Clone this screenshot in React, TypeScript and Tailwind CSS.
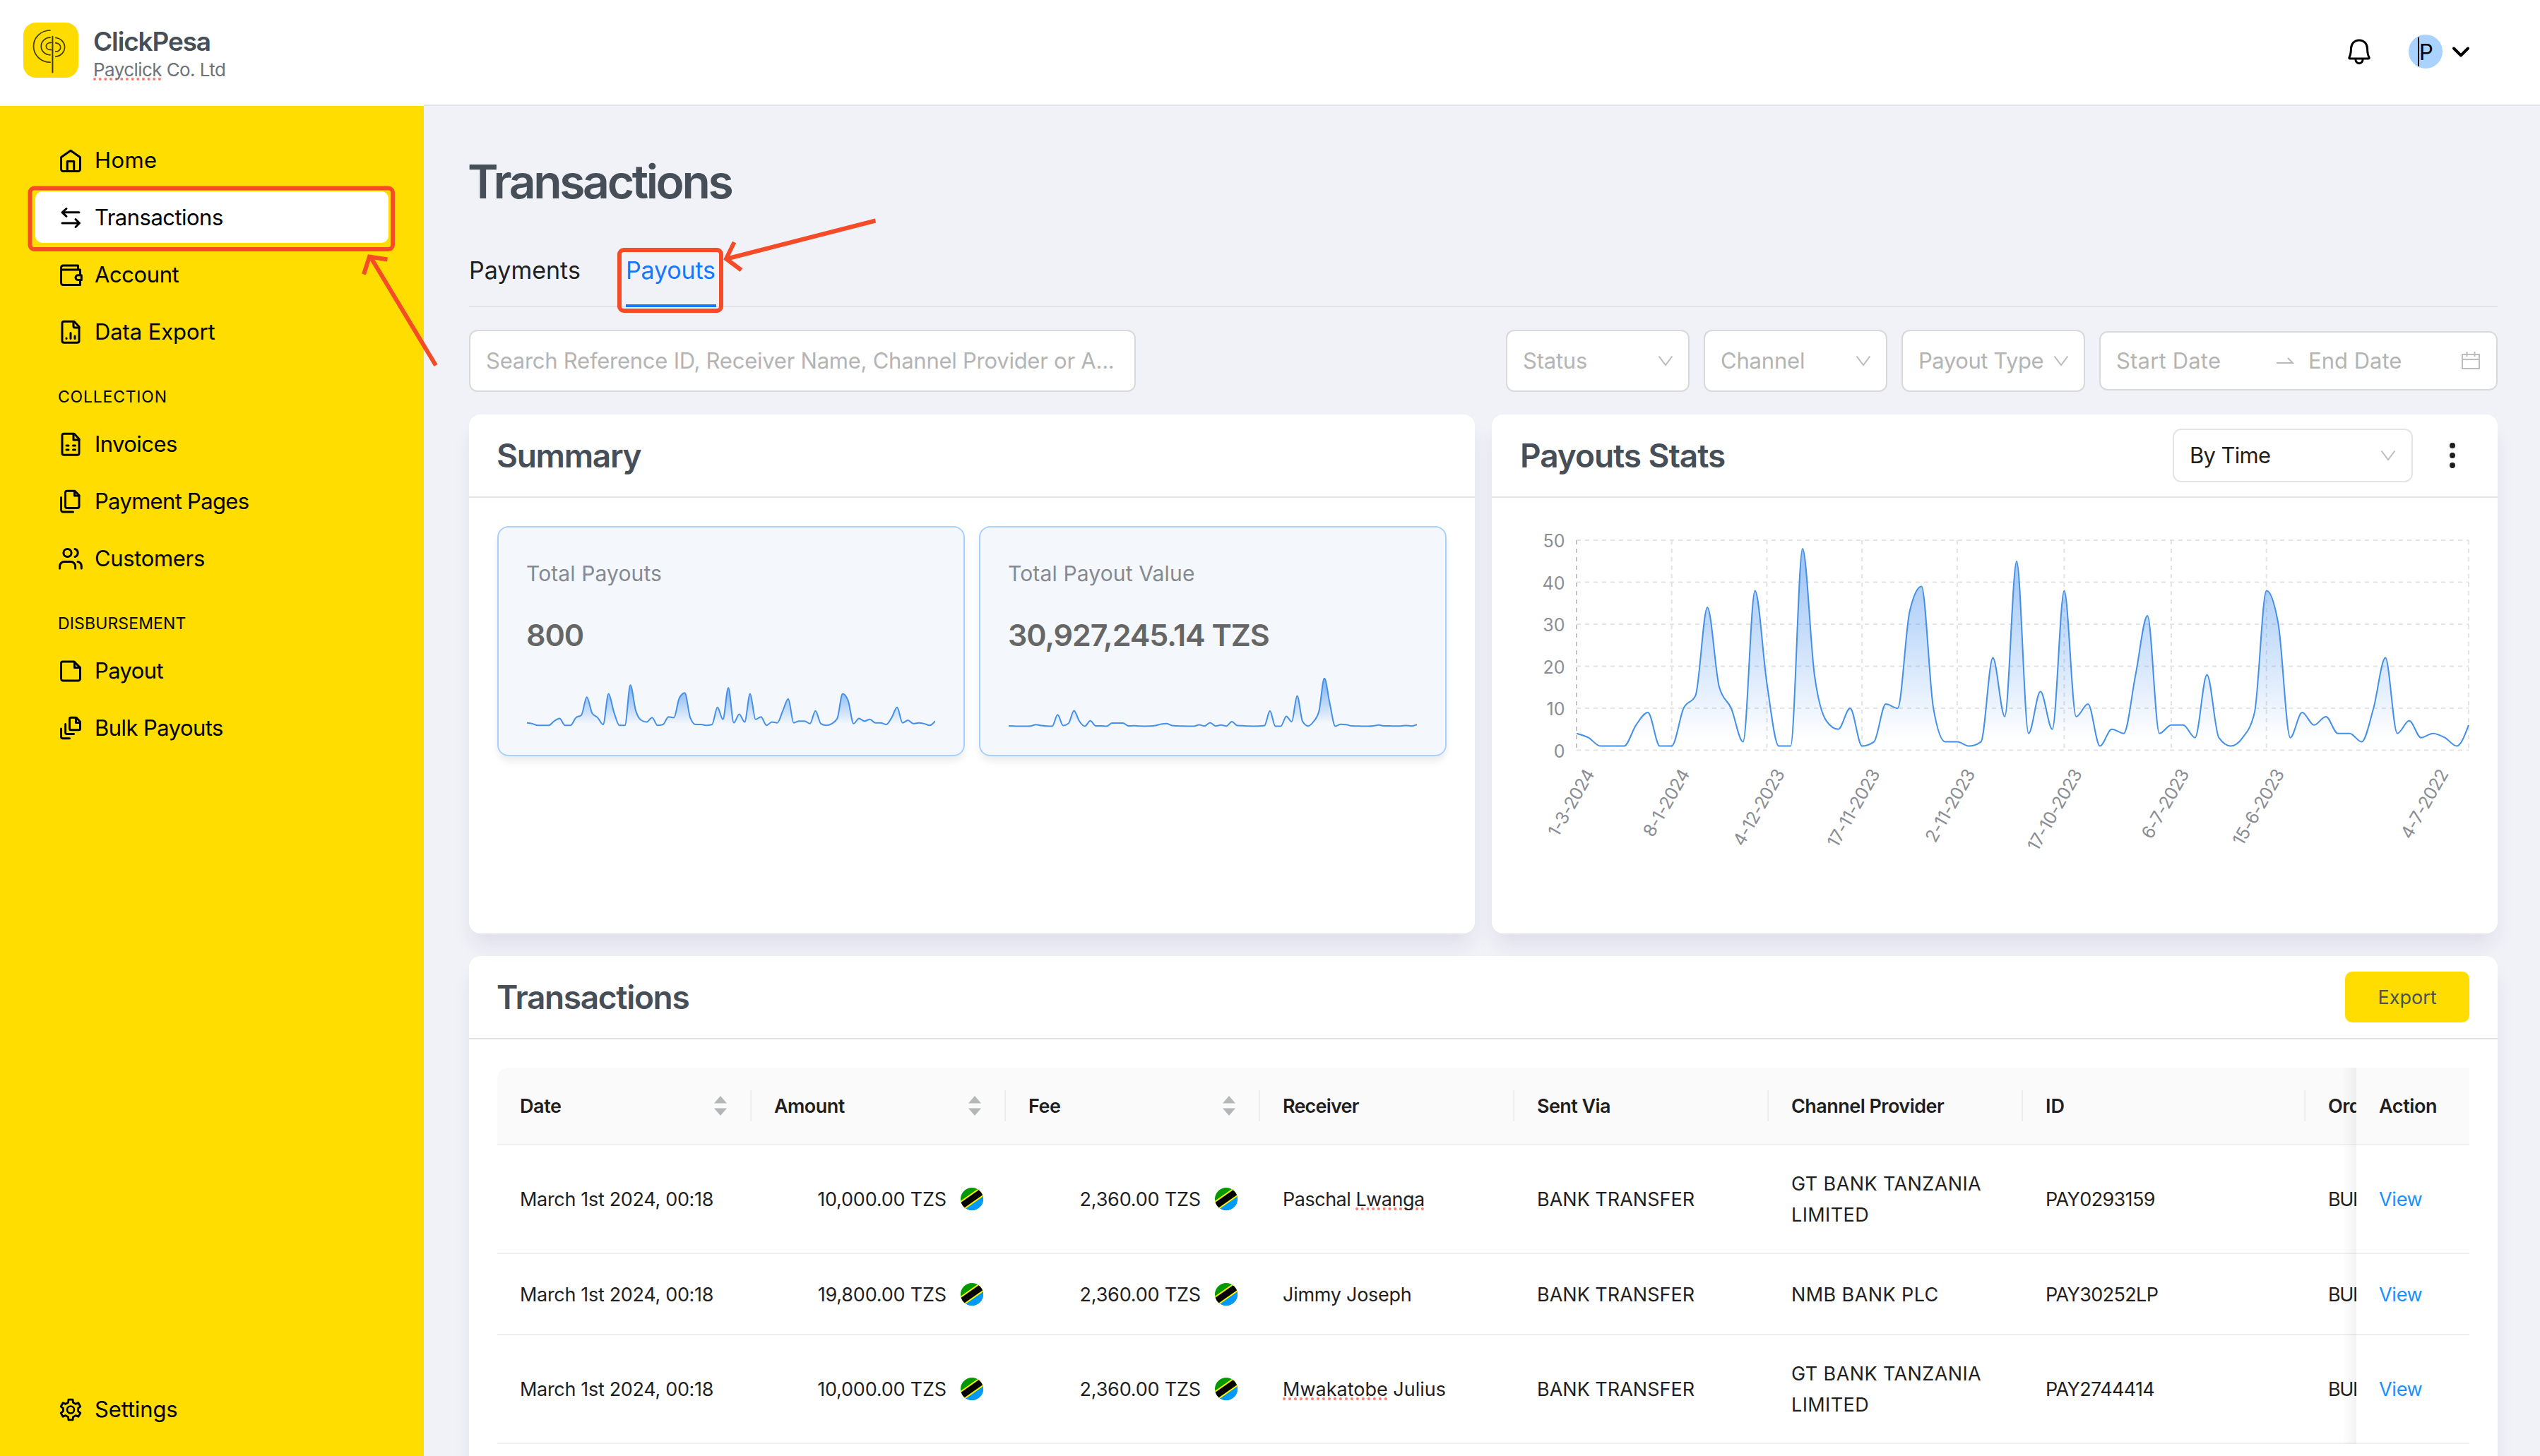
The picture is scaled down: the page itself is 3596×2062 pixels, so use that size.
import type { ReactNode } from 'react'

interface NavItem {
  label: string
  tracking: string
  icon: ReactNode
  active?: boolean
}

interface Transaction {
  id: string
  amount: string
  fee: string
  receiver: ReactNode
  receiverTracking: string
  provider: ReactNode
  rowHeight: string
}

const PAYOUT_COUNTS = [
  4, 3, 1, 1, 1, 6, 9, 1, 1, 10, 13, 34, 15, 10, 2, 38, 16, 1, 1, 48, 18, 7, 5, 10, 1, 2, 11, 10, 33, 39, 10, 2, 2, 1,
  2, 22, 8, 45, 4, 14, 5, 38, 8, 11, 1, 5, 4, 18, 32, 4, 6, 6, 3, 18, 3, 1, 3, 9, 38, 30, 3, 9, 6, 8, 4, 4, 2, 10, 22,
  4, 7, 3, 4, 3, 1, 6,
]

const PAYOUT_VALUES = [
  0.4, 0.2, 0, 0, 0.3, 2.3, 1, 0.3, 0, 16.3, 1, 4, 22, 7, 0, 7.7, 0.5, 0.5, 0, 4.5, 4.5, 4.5, 0.5, 0.7, 0.2, 0.1, 0.2,
  1, 3, 3.7, 1, 0.5, 0.2, 0.1, 0.1, 2, 0.3, 5, 0.3, 1.7, 0.3, 6.5, 1, 0.7, 0.2, 0.1, 0.2, 1, 21.7, 0, 0, 14, 6.5, 43,
  6.7, 0.3, 6.5, 21, 68, 32, 0, 2.7, 2.3, 0.5, 0.3, 0.1, 0, 0.5, 1.7, 0.5, 0.4, 0.2, 0.3, 1, 0.3, 2.3,
]

// Monotone cubic interpolation, keeps the curve from overshooting its points
function monotonePath(points: [number, number][]) {
  const n = points.length
  const slopes: number[] = []
  for (let i = 0; i < n - 1; i++) {
    slopes.push((points[i + 1][1] - points[i][1]) / (points[i + 1][0] - points[i][0]))
  }
  const tangents = points.map((_, i) => {
    if (i === 0 || i === n - 1) return 0
    const a = slopes[i - 1]
    const b = slopes[i]
    return (Math.sign(a) + Math.sign(b)) * Math.min(Math.abs(a), Math.abs(b), 0.25 * Math.abs(a + b))
  })
  tangents[0] = (3 * slopes[0] - tangents[1]) / 2
  tangents[n - 1] = (3 * slopes[n - 2] - tangents[n - 2]) / 2

  let d = `M${points[0][0]},${points[0][1]}`
  for (let i = 0; i < n - 1; i++) {
    const [x0, y0] = points[i]
    const [x1, y1] = points[i + 1]
    const h = (x1 - x0) / 3
    d += `C${x0 + h},${y0 + h * tangents[i]},${x1 - h},${y1 - h * tangents[i + 1]},${x1},${y1}`
  }
  return d
}

function gearPath() {
  const at = (deg: number, r: number) => {
    const a = (deg * Math.PI) / 180
    return `${(20 + r * Math.cos(a)).toFixed(2)} ${(20.5 + r * Math.sin(a)).toFixed(2)}`
  }
  let d = ''
  for (let k = 0; k < 6; k++) {
    const a = -90 + 60 * k
    d += `${k === 0 ? 'M' : 'L'}${at(a - 19, 10.8)}L${at(a - 12, 14.6)}L${at(a + 12, 14.6)}L${at(a + 19, 10.8)}`
  }
  return d + 'Z'
}

function NavIcon({ children }: { children: ReactNode }) {
  return (
    <svg
      className="size-10 shrink-0"
      viewBox="0 0 40 40"
      fill="none"
      stroke="currentColor"
      strokeWidth="3"
      strokeLinecap="round"
      strokeLinejoin="round"
    >
      {children}
    </svg>
  )
}

const mainItems: NavItem[] = [
  {
    label: 'Home',
    tracking: 'tracking-[0.013em]',
    icon: (
      <NavIcon>
        <path d="M6.5 15.8 20 6.2l13.5 9.6V32.500a3 3 0 0 1-3 3h-21a3 3 0 0 1-3-3Z" />
        <path d="M15.300 35V21.500h9.400V35" />
      </NavIcon>
    ),
  },
  {
    label: 'Transactions',
    tracking: 'tracking-[-0.017em]',
    active: true,
    icon: (
      <NavIcon>
        <path d="M32 12.800H8M14 7.500 8 12.800l6 5.500M8 28h24.500M27 22.500l5.500 5.500-5.500 5.500" />
      </NavIcon>
    ),
  },
  {
    label: 'Account',
    tracking: 'tracking-[-0.013em]',
    icon: (
      <NavIcon>
        <path d="M30.500 13V7H9.500a3 3 0 0 0-3 3v21.500a3 3 0 0 0 3 3h24v-6M33.500 19.500V13H8.500" />
        <path d="M35.300 20.800h-5a3.300 3.300 0 0 0 0 6.600h5Z" />
      </NavIcon>
    ),
  },
  {
    label: 'Data Export',
    tracking: 'tracking-[-0.003em]',
    icon: (
      <NavIcon>
        <path d="M10.500 5.200H25l7 7.500v20a2.600 2.600 0 0 1-2.600 2.600H10.600A2.600 2.600 0 0 1 8 32.700v-25a2.500 2.500 0 0 1 2.500-2.500Z" />
        <path d="M24 5.500V12a2 2 0 0 0 2 2h6M14 29v.5M20 21.500v8M26 26v3.500" />
      </NavIcon>
    ),
  },
]

const collectionItems: NavItem[] = [
  {
    label: 'Invoices',
    tracking: 'tracking-[-0.018em]',
    icon: (
      <NavIcon>
        <path d="M10.500 5.200H25l7 7.500v20a2.600 2.600 0 0 1-2.600 2.600H10.600A2.600 2.600 0 0 1 8 32.700v-25a2.500 2.500 0 0 1 2.500-2.500Z" />
        <path d="M24 5.500V14h8M14 22h3M23.500 22h3M14 28h3M23.500 28h3" />
      </NavIcon>
    ),
  },
  {
    label: 'Payment Pages',
    tracking: 'tracking-[-0.022em]',
    icon: (
      <NavIcon>
        <path d="M15 5.200h11l6 6.300v15.500a2.600 2.600 0 0 1-2.600 2.600H15a2.500 2.500 0 0 1-2.500-2.500V7.700A2.500 2.500 0 0 1 15 5.200Z" />
        <path d="M25.500 5.500V12H32M6.500 14.500V32a3 3 0 0 0 3 3H23.500" />
      </NavIcon>
    ),
  },
  {
    label: 'Customers',
    tracking: 'tracking-[-0.011em]',
    icon: (
      <NavIcon>
        <circle cx="15.500" cy="12" r="5.600" />
        <path d="M26 6.500a5.700 5.700 0 0 1 0 11M4.600 34v-3a6.500 6.500 0 0 1 6.500-6.500h9a6.500 6.500 0 0 1 6.500 6.500v3M30 24.500c3 .6 5.300 3 5.300 6.500v3" />
      </NavIcon>
    ),
  },
]

const disbursementItems: NavItem[] = [
  {
    label: 'Payout',
    tracking: 'tracking-[-0.019em]',
    icon: (
      <NavIcon>
        <path d="M9 7h16l8.500 8.500V31a3 3 0 0 1-3 3h-21a3 3 0 0 1-3-3V9.500A2.500 2.500 0 0 1 9 7Z" />
        <path d="M25.500 7.500v8h8" />
      </NavIcon>
    ),
  },
  {
    label: 'Bulk Payouts',
    tracking: 'tracking-[-0.018em]',
    icon: (
      <NavIcon>
        <path d="M20.500 5.200h7.500l5.500 6v9.600a2 2 0 0 1-2 2h-11a2 2 0 0 1-2-2V7.200a2 2 0 0 1 2-2Z" />
        <path d="M27.500 6v6.500h5.500M12.600 14.500v11.800a2.300 2.300 0 0 0 2.300 2.300H24.500M6.500 21v11.200a2.500 2.500 0 0 0 2.500 2.500h9.500" />
      </NavIcon>
    ),
  },
]

const settingsItem: NavItem = {
  label: 'Settings',
  tracking: 'tracking-[-0.005em]',
  icon: (
    <NavIcon>
      <path d={gearPath()} strokeWidth="2.800" />
      <circle cx="20" cy="20.500" r="5" strokeWidth="2.600" />
    </NavIcon>
  ),
}

function Misspelled({ children }: { children: ReactNode }) {
  return (
    <span className="underline decoration-dotted decoration-[4px] underline-offset-[2px] decoration-[#ff7a70] [text-decoration-skip-ink:none]">
      {children}
    </span>
  )
}

const transactions: Transaction[] = [
  {
    id: 'PAY0293159',
    amount: '10,000.00 TZS',
    fee: '2,360.00 TZS',
    receiver: <>Paschal <Misspelled>Lwanga</Misspelled></>,
    receiverTracking: 'tracking-[-0.018em]',
    provider: <>GT BANK TANZANIA<br />LIMITED</>,
    rowHeight: 'h-[154px]',
  },
  {
    id: 'PAY30252LP',
    amount: '19,800.00 TZS',
    fee: '2,360.00 TZS',
    receiver: 'Jimmy Joseph',
    receiverTracking: 'tracking-[-0.010em]',
    provider: 'NMB BANK PLC',
    rowHeight: 'h-[115px]',
  },
  {
    id: 'PAY2744414',
    amount: '10,000.00 TZS',
    fee: '2,360.00 TZS',
    receiver: <><Misspelled>Mwakatobe</Misspelled> Julius</>,
    receiverTracking: 'tracking-normal',
    provider: <>GT BANK TANZANIA<br />LIMITED</>,
    rowHeight: 'h-[154px]',
  },
]

const columns = [
  { title: 'Date', width: 'w-[360px]', tracking: 'tracking-[-0.015em]', sortable: true },
  { title: 'Amount', width: 'w-[360px]', tracking: 'tracking-[-0.02em]', sortable: true },
  { title: 'Fee', width: 'w-[360px]', tracking: 'tracking-[-0.02em]', sortable: true },
  { title: 'Receiver', width: 'w-[360px]', tracking: 'tracking-[-0.030em]', sortable: false },
  { title: 'Sent Via', width: 'w-[360px]', tracking: 'tracking-[-0.022em]', sortable: false },
  { title: 'Channel Provider', width: 'w-[360px]', tracking: 'tracking-[-0.020em]', sortable: false },
  { title: 'ID', width: 'w-[400px]', tracking: 'tracking-normal', sortable: false },
]

function Logo() {
  return (
    <div className="size-[78px] rounded-[18px] bg-[#fedc00]">
      <svg className="size-full" viewBox="0 0 78 78" fill="none" stroke="#3d3a0c" strokeWidth="1.700" strokeLinecap="round">
        <path d="M41.400 19.800V70.500" strokeWidth="2" />
        <path d="M38 11A23.500 22.600 0 0 0 38 56.200M38 21.200A12.800 12.300 0 0 0 38 45.800M39.300 28.300C30 28.300 30 38.600 39.300 38.600" />
        <path d="M45.800 21.500A14 13.400 0 0 1 45.800 48.200M45.800 28.800A7 6.200 0 0 1 45.800 41.200" />
      </svg>
    </div>
  )
}

function Header() {
  return (
    <header className="flex h-[150px] bg-white">
      <div className="flex w-[600px] gap-[21px] pl-[33px] pt-8">
        <Logo />
        <div className="pt-[5px]">
          <div className="text-[37px] font-semibold leading-[44px] tracking-[-0.031em] text-[#464e58]">ClickPesa</div>
          <div className="text-[26px] leading-[36px] tracking-[-0.022em] text-[#6d727b]">
            <Misspelled>Payclick</Misspelled> Co. Ltd
          </div>
        </div>
      </div>
      <div className="flex flex-1 items-center justify-end border-b-2 border-[#e3e4e9] pb-[2px] pr-[98px]">
        <svg className="mr-[50px] size-10" viewBox="0 0 40 40" fill="none" stroke="#000" strokeWidth="3" strokeLinejoin="round">
          <path d="M20 3.900C13 3.900 8.800 9 8.500 15.500 8.400 21 8 24.500 6 28.300c-.5 1.100 0 1.700 1 1.700h26c1 0 1.500-.6 1-1.700-2-3.800-2.400-7.300-2.500-12.800C31.200 9 27 3.900 20 3.900Z" />
          <path d="M14.800 30.500c.3 4 2.300 6.200 5.200 6.200s4.900-2.200 5.200-6.200" />
        </svg>
        <div className="flex size-12 items-center justify-center rounded-full bg-[#a9d2ff]">
          <span className="h-[41px] w-[2px] bg-black" />
          <span className="text-[31px] leading-none text-black">P</span>
        </div>
        <svg className="ml-3 h-5 w-7" viewBox="0 0 28 20" fill="none" stroke="#000" strokeWidth="4" strokeLinecap="round" strokeLinejoin="round">
          <path d="M4 5.500 14 15.500 24 5.500" />
        </svg>
      </div>
    </header>
  )
}

function NavRow({ item }: { item: NavItem }) {
  return (
    <div className={`mb-2 flex h-[73px] shrink-0 items-center gap-[14px] rounded-[10px] pl-[30px] ${item.active ? 'bg-white' : ''}`}>
      {item.icon}
      <span className={`text-[31px] leading-none ${item.tracking}`}>{item.label}</span>
    </div>
  )
}

function Sidebar() {
  return (
    <aside className="flex w-[600px] flex-col bg-[#ffdd00] px-[50px] pt-10 text-black">
      {mainItems.map((item) => <NavRow key={item.label} item={item} />)}
      <div className="pb-[13px] pl-8 pt-[31px] text-[23px] leading-[34px] tracking-[0.034em]">COLLECTION</div>
      {collectionItems.map((item) => <NavRow key={item.label} item={item} />)}
      <div className="pb-[13px] pl-8 pt-[31px] text-[23px] leading-[34px] tracking-[0.006em]">DISBURSEMENT</div>
      {disbursementItems.map((item) => <NavRow key={item.label} item={item} />)}
      <div className="mb-[22px] mt-auto">
        <NavRow item={settingsItem} />
      </div>
    </aside>
  )
}

function SelectArrow() {
  return (
    <svg className="h-4 w-[22px] shrink-0" viewBox="0 0 22 16" fill="none" stroke="#bcbcbc" strokeWidth="2">
      <path d="M1.500 1.500 11 14 20.500 1.500" />
    </svg>
  )
}

function FilterSelect({ label, tracking }: { label: string; tracking: string }) {
  return (
    <div className="flex h-[88px] w-[260px] items-center justify-between rounded-xl border-2 border-[#d9d9d9] bg-white pl-[22px] pr-[21px]">
      <span className={`whitespace-nowrap pb-[2px] text-[31px] leading-none text-[#b4b4b4] ${tracking}`}>{label}</span>
      <SelectArrow />
    </div>
  )
}

function Filters() {
  return (
    <div className="mt-8 flex items-center gap-5">
      <div className="mr-auto flex h-[88px] w-[944px] items-center rounded-xl border-2 border-[#d9d9d9] bg-white pl-[22px]">
        <span className="whitespace-nowrap pb-[2px] text-[31px] leading-none tracking-[-0.008em] text-[#b4b4b4]">
          Search Reference ID, Receiver Name, Channel Provider or A...
        </span>
      </div>
      <FilterSelect label="Status" tracking="tracking-[-0.007em]" />
      <FilterSelect label="Channel" tracking="tracking-[-0.006em]" />
      <FilterSelect label="Payout Type" tracking="tracking-[-0.014em]" />
      <div className="flex h-[84px] w-[564px] items-center rounded-xl border-2 border-[#d9d9d9] bg-white pl-[22px] pr-[22px] text-[31px] leading-none text-[#b4b4b4]">
        <span className="w-[227px] pb-[2px] tracking-[0.006em]">Start Date</span>
        <svg className="mr-5 h-3 w-[25px]" viewBox="0 0 25 12" fill="none" stroke="#b9b9b9" strokeWidth="2">
          <path d="M0 9h23L16 2" />
        </svg>
        <span className="flex-1 pb-[2px]">End Date</span>
        <svg className="h-[26px] w-[28px]" viewBox="0 0 28 26" fill="none" stroke="#bdbdbd" strokeWidth="2">
          <path d="M2 4h24v20H2ZM2 11h24M8.500 0v7M19.500 0v7" />
        </svg>
      </div>
    </div>
  )
}

interface StatCardProps {
  label: string
  labelTracking: string
  value: string
  values: number[]
  unit: number
  gradientId: string
}

function StatCard({ label, labelTracking, value, values, unit, gradientId }: StatCardProps) {
  const baseline = 68.5
  const step = 578 / (values.length - 1)
  const line = monotonePath(values.map((v, i) => [i * step, baseline - v * unit]))

  return (
    <div className="h-[326px] flex-1 rounded-2xl border-2 border-[#a9d1ff] bg-[#f4f8fc] pl-10 pt-[41px] shadow-[0_8px_12px_-2px_rgba(0,0,0,0.09)]">
      <div className={`-ml-px text-[30px] leading-[48px] text-[#858a91] ${labelTracking}`}>{label}</div>
      <div className="-ml-px mt-[33px] text-[43px] font-semibold leading-[60px] tracking-[-0.025em] text-[#666666]">{value}</div>
      <svg className="mt-[31px] h-20 w-[578px]" viewBox="0 0 578 80" fill="none">
        <defs>
          <linearGradient id={gradientId} x1="0" y1="0" x2="0" y2="1">
            <stop offset="0" stopColor="#4791ee" stopOpacity="0.7" />
            <stop offset="0.95" stopColor="#4791ee" stopOpacity="0" />
          </linearGradient>
        </defs>
        <path d={`${line}L578,${baseline}L0,${baseline}Z`} fill={`url(#${gradientId})`} />
        <path d={line} stroke="#448fe8" strokeWidth="2" />
      </svg>
    </div>
  )
}

function SummaryCard() {
  return (
    <section className="h-[735px] flex-1 rounded-2xl bg-white shadow-[0_20px_30px_-6px_rgba(40,40,80,0.1)]">
      <div className="flex h-[118px] items-center border-b-2 border-[#e4e4e6] px-10">
        <h2 className="-ml-px text-[46px] font-semibold leading-none tracking-[-0.028em] text-[#464e58]">Summary</h2>
      </div>
      <div className="flex gap-5 p-10">
        <StatCard
          label="Total Payouts"
          labelTracking="tracking-[0.004em]"
          value="800"
          values={PAYOUT_COUNTS}
          unit={1.213}
          gradientId="count-fill"
        />
        <StatCard
          label="Total Payout Value"
          labelTracking="tracking-[0.005em]"
          value="30,927,245.14 TZS"
          values={PAYOUT_VALUES}
          unit={1}
          gradientId="value-fill"
        />
      </div>
    </section>
  )
}

const xTicks = [
  { index: 0, label: '1-3-2024' },
  { index: 8, label: '8-1-2024' },
  { index: 16, label: '4-12-2023' },
  { index: 24, label: '17-11-2023' },
  { index: 32, label: '2-11-2023' },
  { index: 41, label: '17-10-2023' },
  { index: 50, label: '6-7-2023' },
  { index: 58, label: '15-6-2023' },
  { index: 75, label: '4-7-2022' },
]

function PayoutsChart() {
  const left = 120
  const right = 1383
  const top = 60
  const bottom = 357.5
  const x = (i: number) => left + (i * (right - left)) / 75
  const y = (v: number) => bottom - (v * (bottom - top)) / 50
  const line = monotonePath(PAYOUT_COUNTS.map((v, i) => [x(i), y(v)]))

  return (
    <svg className="h-[560px] w-[1424px]" viewBox="0 0 1424 560" fill="none">
      <defs>
        <linearGradient id="payouts-fill" x1="0" y1="0" x2="0" y2="1">
          <stop offset="0" stopColor="#4791ee" stopOpacity="0.55" />
          <stop offset="0.95" stopColor="#4791ee" stopOpacity="0" />
        </linearGradient>
      </defs>
      <g stroke="#e3e3e5" strokeWidth="2" strokeDasharray="6 6">
        {[0, 10, 20, 30, 40, 50].map((v) => <path key={v} d={`M${left} ${y(v)}H${right}`} />)}
        {xTicks.map((t) => (
          <path key={t.index} d={`M${x(t.index)} ${top}V${bottom}`} stroke={t.index === 0 ? '#c4c4c6' : undefined} />
        ))}
      </g>
      <path d={`${line}L${right},${bottom}L${left},${bottom}Z`} fill="url(#payouts-fill)" />
      <path d={line} stroke="#448fe8" strokeWidth="2" />
      <g fill="#8a8e94" textAnchor="end">
        {[0, 10, 20, 30, 40, 50].map((v) => (
          <text key={v} x={103.500} y={y(v) + 10} fontSize="25">{v}</text>
        ))}
        {xTicks.map((t) => {
          // the last label is pulled in so that it stays inside the card
          const tx = t.index === 75 ? x(75) - 28 : x(t.index) + 26
          return (
            <text key={t.index} x={tx} y="391" fontSize="25" letterSpacing="-0.6" transform={`rotate(-60 ${tx} 391)`}>
              {t.label}
            </text>
          )
        })}
      </g>
    </svg>
  )
}

function StatsCard() {
  return (
    <section className="h-[735px] flex-1 rounded-2xl bg-white shadow-[0_20px_30px_-6px_rgba(40,40,80,0.1)]">
      <div className="flex h-[118px] items-center border-b-2 border-[#e4e4e6] pl-10 pr-[60px]">
        <h2 className="text-[46px] font-semibold leading-none tracking-[-0.023em] text-[#464e58]">Payouts Stats</h2>
        <div className="ml-auto flex h-[76px] w-[340px] items-center justify-between rounded-xl border-2 border-[#e4e4e4] bg-white pl-[22px] pr-[22px]">
          <span className="pb-[2px] text-[31px] leading-none tracking-[-0.022em] text-[#1f1f1f]">By Time</span>
          <SelectArrow />
        </div>
        <div className="ml-[52px] flex flex-col gap-[6px]">
          <span className="size-2 rounded-full bg-[#1f1f1f]" />
          <span className="size-2 rounded-full bg-[#1f1f1f]" />
          <span className="size-2 rounded-full bg-[#1f1f1f]" />
        </div>
      </div>
      <PayoutsChart />
    </section>
  )
}

function TanzaniaFlag() {
  return (
    <svg className="size-8 shrink-0 overflow-hidden rounded-full" viewBox="0 0 32 32">
      <rect width="32" height="32" fill="#009900" />
      <path d="M36 2V36H-4V29Z" fill="#0099ff" />
      <path d="M-4 29.500 36 1.500" stroke="#ffee00" strokeWidth="13" />
      <path d="M-4 29.500 36 1.500" stroke="#000" strokeWidth="9" />
    </svg>
  )
}

function SortArrows() {
  return (
    <svg className="h-[28px] w-[18px]" viewBox="0 0 18 28" fill="#b5b6b7">
      <path d="M9 0 18 10.500H0ZM9 28 18 17.500H0Z" />
    </svg>
  )
}

function MoneyCell({ value }: { value: string }) {
  return (
    <div className="flex w-[360px] items-center justify-end gap-5 pr-8">
      <span className="pt-[2px] tracking-[-0.007em]">{value}</span>
      <TanzaniaFlag />
    </div>
  )
}

function TransactionsTable() {
  return (
    <div className="flex text-[27px] leading-[44px] text-[#1f1f1f]">
      <div className="relative w-[2632px] overflow-hidden rounded-tl-2xl">
        <div className="flex h-[110px] w-[3000px] items-center border-b-2 border-[#f0f0f0] bg-[#fafafa] font-semibold">
          {columns.map((col) => (
            <div key={col.title} className={`flex h-[44px] items-center justify-between border-r-2 border-[#eeeeee] pl-8 pr-[33px] ${col.width}`}>
              <span className={`pt-[2px] ${col.tracking}`}>{col.title}</span>
              {col.sortable && <SortArrows />}
            </div>
          ))}
          <div className="pl-8 pt-[2px] tracking-[-0.02em]">Order</div>
        </div>
        {transactions.map((tx) => (
          <div key={tx.id} className={`flex w-[3000px] items-center border-b-2 border-[#f0f0f0] ${tx.rowHeight}`}>
            <div className="w-[360px] pl-8 pt-[2px] tracking-[-0.012em]">March 1st 2024, 00:18</div>
            <MoneyCell value={tx.amount} />
            <MoneyCell value={tx.fee} />
            <div className={`w-[360px] pl-8 pt-[2px] ${tx.receiverTracking}`}>{tx.receiver}</div>
            <div className="w-[360px] pl-8 pt-[2px]">BANK TRANSFER</div>
            <div className="w-[360px] whitespace-nowrap pl-8 pt-[2px] tracking-[0.015em]">{tx.provider}</div>
            <div className="w-[400px] pl-8 pt-[2px] tracking-[-0.024em]">{tx.id}</div>
            <div className="pl-8 pt-[2px] tracking-[-0.050em]">BULK</div>
          </div>
        ))}
        <div className="absolute inset-y-0 right-0 w-5 bg-gradient-to-l from-black/5 to-transparent" />
      </div>
      <div className="w-40">
        <div className="flex h-[110px] items-center border-b-2 border-[#f0f0f0] bg-[#fafafa] pl-8 pt-[2px] font-semibold tracking-[-0.015em]">
          Action
        </div>
        {transactions.map((tx) => (
          <div key={tx.id} className={`flex items-center border-b-2 border-[#f0f0f0] pl-8 pt-[2px] tracking-[-0.010em] ${tx.rowHeight}`}>
            <a className="text-[#1890ff]">View</a>
          </div>
        ))}
      </div>
    </div>
  )
}

function TransactionsCard() {
  return (
    <section className="mt-8 h-[900px] rounded-2xl bg-white shadow-[0_20px_30px_-6px_rgba(40,40,80,0.1)]">
      <div className="flex h-[118px] items-center justify-between border-b-2 border-[#e4e4e6] px-10">
        <h2 className="-ml-px text-[46px] font-semibold leading-none tracking-[-0.029em] text-[#464e58]">Transactions</h2>
        <button className="h-[72px] w-[176px] rounded-[10px] bg-[#ffdd00] pt-[2px] text-[27px] text-[#4b525b]">Export</button>
      </div>
      <div className="p-10">
        <TransactionsTable />
      </div>
    </section>
  )
}

// Red boxes and arrows that point at the menu entry and the tab
function Annotations() {
  return (
    <svg className="pointer-events-none absolute left-0 top-0 h-[600px] w-[1400px]" viewBox="0 0 1400 600" fill="none" stroke="#f54b27" strokeWidth="6">
      <rect x="42.500" y="266.500" width="513.500" height="86.500" rx="6" />
      <rect x="877" y="354" width="144" height="86" rx="6" />
      <path d="M617 517.500 524 363M548.500 367.500 523 363.500 515 388.500" />
      <path d="M1239.500 312.500 1029 366.500M1039.500 343 1028 366.500 1049.500 382.500" />
    </svg>
  )
}

export default function App() {
  return (
    <div className="relative flex h-[2062px] w-[3596px] flex-col overflow-hidden bg-[#f1f2f8] font-['Inter',sans-serif]">
      <Header />
      <div className="flex min-h-0 flex-1">
        <Sidebar />
        <main className="flex-1 overflow-hidden pl-16 pr-[60px] pt-[67px]">
          <h1 className="-ml-[2px] text-[66px] font-semibold leading-[80px] tracking-[-0.051em] text-[#464e58]">Transactions</h1>
          <div className="flex h-[138px] gap-16 border-b-2 border-[#e2e3e7] text-[34px] leading-[44px]">
            <div className="flex h-[138px] w-[158px] items-end border-b-4 border-transparent pb-[26px] text-[#1f1f1f]">Payments</div>
            <div className="flex h-[138px] w-[128px] items-end border-b-4 border-[#1677ff] pb-[26px] tracking-[-0.005em] text-[#1677ff]">Payouts</div>
          </div>
          <Filters />
          <div className="mt-8 flex gap-6">
            <SummaryCard />
            <StatsCard />
          </div>
          <TransactionsCard />
        </main>
      </div>
      <Annotations />
    </div>
  )
}
